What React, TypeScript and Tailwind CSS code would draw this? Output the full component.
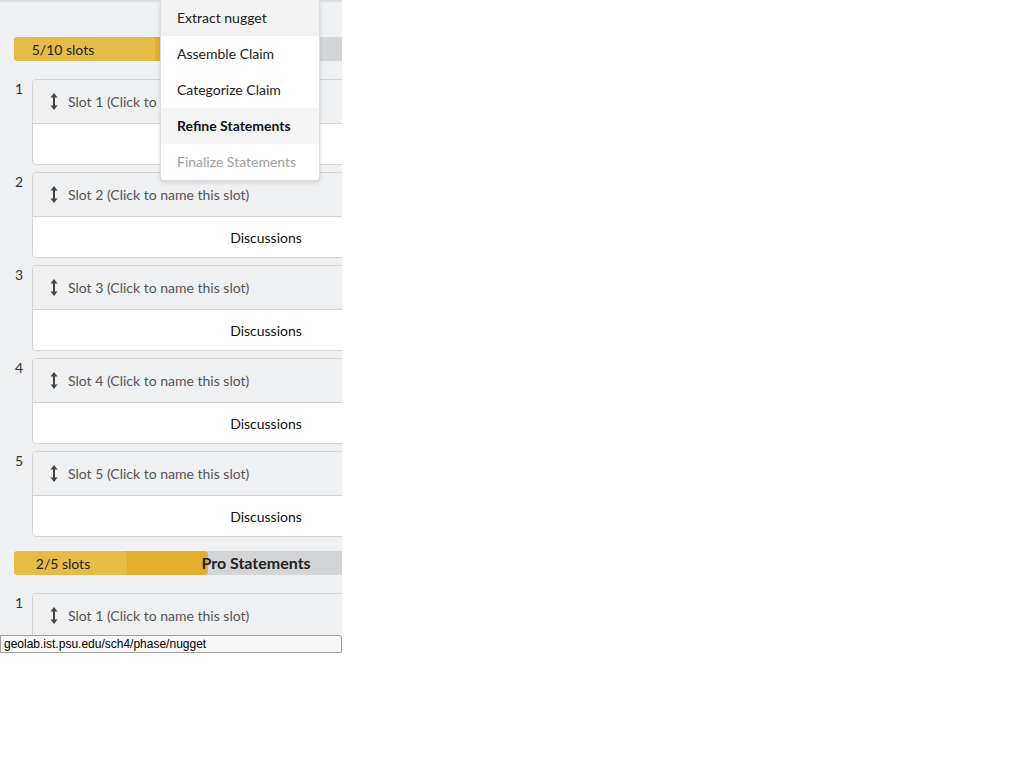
import React from 'react';

const MENU = [
  { label: 'Extract nugget', cls: 'bg-[#f2f2f2] text-[#222]' },
  { label: 'Assemble Claim', cls: 'text-[#222]' },
  { label: 'Categorize Claim', cls: 'text-[#222]' },
  { label: 'Refine Statements', cls: 'bg-[#f4f4f4] font-bold text-[#111]' },
  { label: 'Finalize Statements', cls: 'text-[#a0a0a0]' },
];

function ArrowsVertical() {
  return (
    <svg width="8" height="17" viewBox="0 0 8 17" className="shrink-0">
      <path d="M4 0 L7.5 4.5 L5 4.5 L5 12.5 L7.5 12.5 L4 17 L0.5 12.5 L3 12.5 L3 4.5 L0.5 4.5 Z" fill="#444" />
    </svg>
  );
}

function ProgressBar({
  label,
  title,
  pct,
  labelWidth,
}: {
  label: string;
  title: string;
  pct: number;
  labelWidth: number;
}) {
  return (
    <div className="relative flex h-[24px] w-[484px] items-center overflow-hidden rounded-l-[4px] bg-[#d3d4d6]">
      <div className="absolute left-0 top-0 h-full rounded-r-[4px] bg-[#e2b02e]" style={{ width: `${pct}%` }} />
      <div
        className="absolute left-0 top-0 h-full rounded-[4px] bg-[#e6bc48]"
        style={{ width: `${labelWidth}px` }}
      />
      <div className="relative flex h-full w-[98px] items-center justify-center text-[14px] text-[#222]">
        {label}
      </div>
      <div className="absolute inset-0 flex items-center justify-center text-[16px] font-bold text-[#222]">{title}</div>
    </div>
  );
}

function Slot({ n }: { n: number }) {
  return (
    <div className="flex">
      <div className="w-[18px] pl-[1px] pt-[1px] text-[14px] leading-[17px] text-[#333]">{n}</div>
      <div className="w-[468px] overflow-hidden rounded-[4px] border border-[#d4d4d5] bg-white">
        <div className="flex h-[44px] items-center gap-[10px] border-b border-[#d4d4d5] bg-[#eff0f2] pl-[17px] text-[14px] text-[#555]">
          <ArrowsVertical />
          <span>Slot {n} (Click to name this slot)</span>
        </div>
        <div className="flex h-[40px] items-center justify-center text-[14px] text-[#111]">Discussions</div>
      </div>
    </div>
  );
}

export default function App() {
  return (
    <div className="relative h-[778px] w-[1034px] bg-white font-['Lato','Noto_Sans',sans-serif]">
      <div className="relative h-[653px] w-[342px] overflow-hidden bg-[#eff0f2]">
        <div className="absolute left-0 right-0 top-0 h-[3px] bg-gradient-to-b from-[#d8d8da] to-[#eff0f2]" />
        <div className="flex w-[520px] flex-col pl-[14px] pt-[37px]">
          <ProgressBar label="5/10 slots" title="Con Statements" pct={50} labelWidth={141} />
          <div className="mt-[18px] flex flex-col gap-[7px]">
            <Slot n={1} />
            <Slot n={2} />
            <Slot n={3} />
            <Slot n={4} />
            <Slot n={5} />
          </div>
          <div className="mt-[14px]">
            <ProgressBar label="2/5 slots" title="Pro Statements" pct={40} labelWidth={113} />
          </div>
          <div className="mt-[18px] flex flex-col gap-[7px]">
            <Slot n={1} />
          </div>
        </div>

        <div className="absolute left-[160px] top-0 w-[160px] overflow-hidden rounded-b-[4px] border border-t-0 border-[#dcdcdc] bg-white shadow-[0_2px_4px_rgba(0,0,0,0.12)]">
          {MENU.map((m) => (
            <div key={m.label} className={`flex h-[36px] items-center pb-[1px] pl-[16px] text-[14px] ${m.cls}`}>
              {m.label}
            </div>
          ))}
        </div>

        <div className="absolute bottom-0 left-0 flex h-[18px] w-[342px] items-center rounded-tr-[3px] border border-[#a0a0a0] bg-[#f7f7f7] pl-[3px] font-['Liberation_Sans',Arial,sans-serif] text-[12px] leading-[14px] text-black">
          geolab.ist.psu.edu/sch4/phase/nugget
        </div>
      </div>
    </div>
  );
}
